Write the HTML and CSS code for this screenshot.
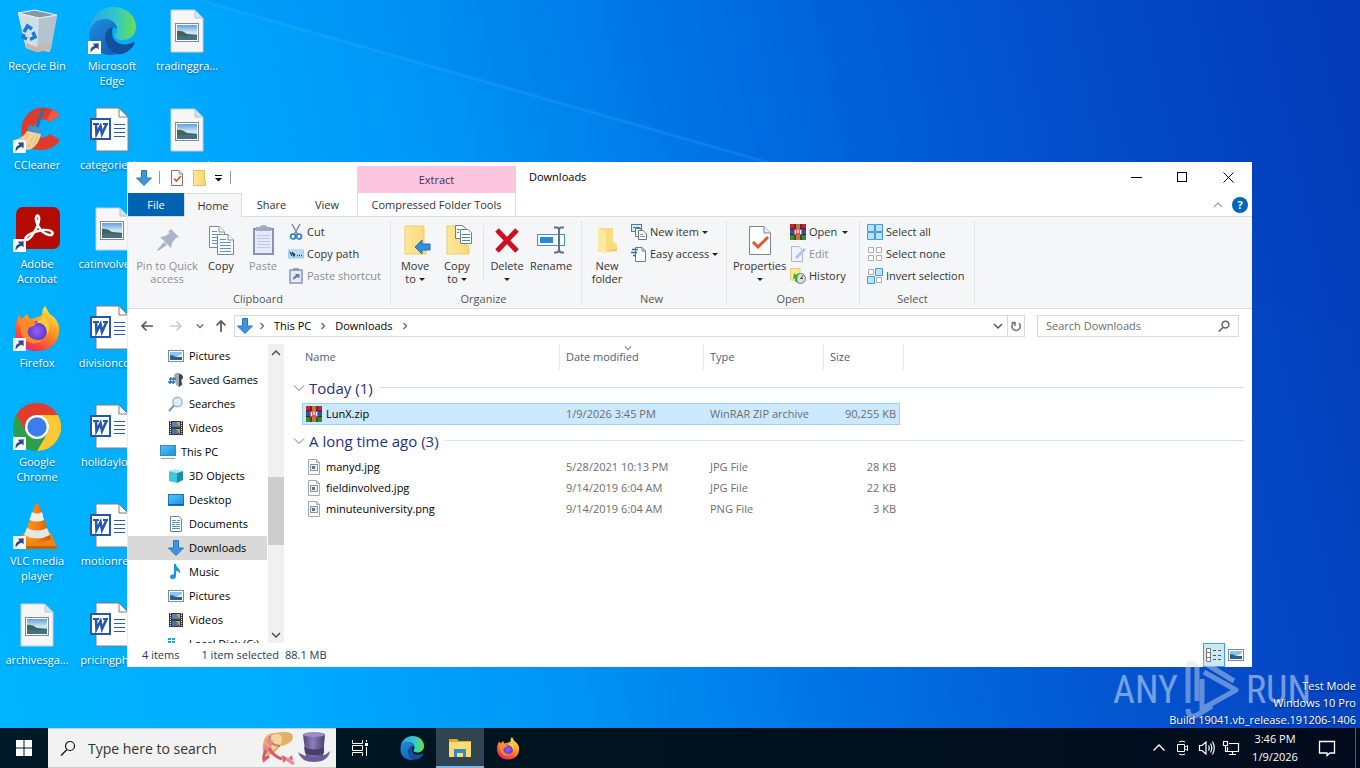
FILE: index.html
```html
<!DOCTYPE html>
<html lang="en">
<head>
<meta charset="utf-8">
<title>Downloads</title>
<link rel="stylesheet" href="styles.css">
</head>
<body>
<svg class="defs" aria-hidden="true">
<defs>
<linearGradient id="gEdgeA" x1="0" y1="0" x2="1" y2="0"><stop offset="0" stop-color="#2aa6e8"/><stop offset=".55" stop-color="#2fc6cf"/><stop offset="1" stop-color="#6be04c"/></linearGradient>
<linearGradient id="gEdgeB" x1="0" y1="0" x2=".6" y2="1"><stop offset="0" stop-color="#1f8fe0"/><stop offset="1" stop-color="#1263b8"/></linearGradient>
<linearGradient id="gFox" x1=".8" y1="0" x2=".2" y2="1"><stop offset="0" stop-color="#fff04a"/><stop offset=".4" stop-color="#ff9a1f"/><stop offset=".75" stop-color="#ff4a3d"/><stop offset="1" stop-color="#e8157a"/></linearGradient>
<radialGradient id="gFoxIn"><stop offset="0" stop-color="#9a5bff"/><stop offset="1" stop-color="#5a3cc4"/></radialGradient>
<linearGradient id="gCone" x1="0" y1="0" x2="1" y2="0"><stop offset="0" stop-color="#ff9a20"/><stop offset=".5" stop-color="#f57f10"/><stop offset="1" stop-color="#c95c00"/></linearGradient>
<linearGradient id="gSky" x1="0" y1="0" x2="0" y2="1"><stop offset="0" stop-color="#5f9fe0"/><stop offset=".5" stop-color="#cfe6f5"/><stop offset="1" stop-color="#7fa6bf"/></linearGradient>
<linearGradient id="gFold" x1="0" y1="0" x2="1" y2="0"><stop offset="0" stop-color="#ffe79a"/><stop offset="1" stop-color="#f7d876"/></linearGradient>
<linearGradient id="gBin" x1="0" y1="0" x2="1" y2="0"><stop offset="0" stop-color="#d5e4ee"/><stop offset=".55" stop-color="#e9f0f4"/><stop offset="1" stop-color="#9fb3c2"/></linearGradient>
<linearGradient id="gScreen" x1="0" y1="0" x2="1" y2="1"><stop offset="0" stop-color="#58c4fb"/><stop offset="1" stop-color="#1590e4"/></linearGradient>
<linearGradient id="gHat" x1="0" y1="0" x2="1" y2="0"><stop offset="0" stop-color="#54457c"/><stop offset=".45" stop-color="#8d7cb8"/><stop offset="1" stop-color="#4b3d70"/></linearGradient>

<symbol id="shortcut" viewBox="0 0 12 12"><rect width="12" height="12" fill="#f7f9fb"/><path d="M2.500 10.500C2 7 3.500 5 6 4.600L4.500 2.500L9.800 2L9.800 7.500L8 6.200C6 6.500 4.500 8 2.500 10.500Z" fill="#2b4a86"/></symbol>
<symbol id="bin" viewBox="0 0 48 48"><path d="M5 6L13 41L37 45L44 9Z" fill="url(#gBin)"/><path d="M5 6L26 10L24 45L13 41Z" fill="#cfdfe9"/><path d="M26 10L44 9L38 42L24 45Z" fill="#b4c3cd"/><path d="M5 6L22 3L44 8L26 11Z" fill="#8699a6" stroke="#eef5f9"/><path d="M13 36L24 40L38 37L37 43L24 45L13 41Z" fill="#c9b8a8"/><g fill="none" stroke="#1a7ad0" stroke-width="3.500"><path d="M11 25L14.500 19L19 22"/><path d="M20 25L22 30L17 32.500"/><path d="M14 32L10 30L11 27"/></g></symbol>
<symbol id="edge" viewBox="0 0 48 48"><path d="M1 27C1 10 12 0 25 0C39 0 48 9 48 20C48 28 42 33 35 33C29 33 27 31 27 29C27 27 29 26 29 22C29 17 24 12 16 12C8 12 3 18 1 27Z" fill="url(#gEdgeA)"/><path d="M1 27C3 17 9 12 17 12C24 12 29 17 29 22C26 18 17 22 17 31C17 38 22 45 29 47C14 51 1 41 1 27Z" fill="url(#gEdgeB)"/><path d="M17 31C17 25 20 21 25 20C23 26 24 35 33 37C38 38 42 37 45 35C47 34 47 36 46 38C41 45 35 48 29 47C22 45 17 38 17 31Z" fill="#154f9c"/></symbol>
<symbol id="picpage" viewBox="0 0 48 48"><path d="M8 3H32L40 11V45H8Z" fill="#f6f6f6" stroke="#c9ccd0"/><path d="M32 3V11H40Z" fill="#c9e7f7" stroke="#b9c4ca"/><rect x="12.500" y="16.500" width="23" height="18" fill="#fff" stroke="#7f8c93"/><rect x="14" y="18" width="20" height="15" fill="url(#gSky)"/><path d="M14 24Q19 23 24 27L34 28V29H14Z" fill="#3f6650"/><path d="M14 29H34V33H14Z" fill="#456f8b"/></symbol>
<symbol id="word" viewBox="0 0 48 48"><path d="M8 2H31L40 11V45H8Z" fill="#fff" stroke="#7d7d7d"/><path d="M31 2V11H40Z" fill="#fff" stroke="#7d7d7d"/><g stroke="#2b5fb4"><path d="M26 18.500H37M26 22.500H37M26 26.500H37M26 30.500H37"/></g><rect x="3" y="13" width="19" height="20" fill="#fff" stroke="#2457ad" stroke-width="2"/><path d="M5 18H11M15 18H20" stroke="#2457ad" stroke-width="2"/><path d="M8 18L8.500 28L12.500 20L14 28L18.500 18" fill="none" stroke="#2457ad" stroke-width="2.600"/></symbol>
<symbol id="ccleaner" viewBox="0 0 48 48"><path d="M47 9C35-4 13 0 9 19C6 36 16 45 28 44C37 44 43 40 47 34L37 28C31 34 21 32 21 23C21 14 31 11 37 16Z" fill="#dd3b2b"/><path d="M47 9L37 16L34 13L40 3Z" fill="#f05a42"/><path d="M30 3L24 21" stroke="#2a6fa8" stroke-width="3"/><path d="M16 19L28 22L29 28L14 26Z" fill="#3f94cf"/><path d="M14 25L28 28C26 38 20 43 15 44C9 42 4 38 1 34C7 33 11 30 14 25Z" fill="#f3d29c"/><path d="M16 28L9 38M21 29L15 41M25 29L20 40" stroke="#dcb77c"/></symbol>
<symbol id="acrobat" viewBox="0 0 48 48"><rect x="3" y="2" width="44" height="42" rx="7" fill="#b30b00"/><path d="M13 35C10 32 20 26 30 25C41 24 42 31 36 30C30 29 24 22 23 15C22 9 27 9 26 15C25 22 18 35 13 35Z" fill="none" stroke="#fff" stroke-width="2.500"/></symbol>
<symbol id="firefox" viewBox="0 0 48 48"><path d="M32 2C35 6 35 9 38 11C44 15 47 21 46 28C45 40 36 47 24 47C12 47 2 39 2 26C2 20 4 15 6 11L9 15C11 12 13 11 14 10L17 15C22 14 26 13 29 11C29 7 30 4 32 2Z" fill="url(#gFox)"/><circle cx="24" cy="27" r="10" fill="url(#gFoxIn)"/><path d="M5 17C11 12 18 15 23 19C22 23 16 22 15 26C13 33 22 38 31 35C25 43 9 40 8 26C8 22 5 21 5 17Z" fill="#ff8a2b"/><path d="M30 12C36 17 38 24 34 31C35 20 26 18 23 19C25 16 29 16 30 12Z" fill="#ffc93a"/></symbol>
<symbol id="chrome" viewBox="0 0 48 48"><circle cx="24" cy="24" r="24" fill="#2da94f"/><path d="M3.200 12A24 24 0 0 1 44.800 12H24A12 12 0 0 0 13.600 30Z" fill="#e33b2e"/><path d="M44.800 12A24 24 0 0 1 24 48L34.400 30A12 12 0 0 0 34.400 18L24 12Z" fill="#fcc934"/><path d="M3.200 12A24 24 0 0 0 24 48L34.400 30H13.600Z" fill="#2d9f4b"/><circle cx="24" cy="24" r="12" fill="#fff"/><circle cx="24" cy="24" r="9.700" fill="#3b7ded"/></symbol>
<symbol id="vlc" viewBox="0 0 48 48"><path d="M10 31H38L44 46H4Z" fill="#f08312"/><path d="M4 44H44V47H4Z" fill="#c46208"/><path d="M22 3Q24 0 26 3L38 37Q24 44 10 37Z" fill="url(#gCone)"/><path d="M19 10Q24 13 29 10L31 18Q24 21 16.500 18Z" fill="#efefef"/><path d="M14 26Q24 31 34 26L37 33Q24 40 11 33Z" fill="#e6e6e6"/></symbol>

<symbol id="down" viewBox="0 0 16 16"><path d="M5.500 .5H10.500V8H15.500L8 15.500L.5 8H5.500Z" fill="#3d95e0" stroke="#2577bd"/></symbol>
<symbol id="prop" viewBox="0 0 16 16"><path d="M2.500 .5H10L13.500 4V15.500H2.500Z" fill="#fff" stroke="#777"/><path d="M10 .5V4H13.500" fill="none" stroke="#999"/><path d="M5 8.500L7.500 11L12 6" fill="none" stroke="#d8502e" stroke-width="1.600"/></symbol>
<symbol id="folder" viewBox="0 0 16 16"><path d="M1.500 .5H12.500V10L13.500 11V15.500H1.500Z" fill="url(#gFold)" stroke="#e4bf55"/></symbol>
<symbol id="pin" viewBox="0 0 32 32"><path d="M17 8L20 5L28 13L25 14L21 19L20 24L9 13L14 12L19 9ZM13 18L16 21L7 27L6 26Z" fill="#aab5c8"/></symbol>
<symbol id="copy" viewBox="0 0 32 32"><g fill="#fff" stroke="#7f8790"><path d="M4.500 2.500H14L19.500 8V23.500H4.500Z"/><path d="M12.500 10.500H23L28.500 16V30.500H12.500Z"/><path d="M14 2.500V8H19.500M23 10.500V16H28.500"/></g><path d="M7 7.500H12M7 10.500H12M7 13.500H12M7 16.500H12M7 19.500H12M15 15.500H21M15 18.500H26M15 21.500H26M15 24.500H26M15 27.500H26" stroke="#5c93d8"/></symbol>
<symbol id="paste" viewBox="0 0 32 32"><rect x="7" y="5" width="19" height="25" fill="#e4eafa" stroke="#8795b5" stroke-width="2"/><path d="M9 3H13Q13 1 16.500 1T20 3H24V7H9Z" fill="#a0aabd"/><path d="M10 11.500H23M10 14.500H23M10 17.500H23M10 20.500H23M10 23.500H23" stroke="#bcc8e4"/></symbol>
<symbol id="cut" viewBox="0 0 16 16"><path d="M4 0L10 11M12 0L6 11" stroke="#7d8894" stroke-width="1.400"/><g fill="none" stroke="#2c7fc4" stroke-width="1.700"><circle cx="5" cy="12.500" r="2.500"/><circle cx="11" cy="12.500" r="2.500"/></g></symbol>
<symbol id="path" viewBox="0 0 16 16"><rect x=".5" y="4" width="15" height="8" fill="#b9dcf6" stroke="#a4cbe8"/><path d="M2 6L4 10M4 6L6 10L7 8M9 9.500H10M11 9.500H12M13 9.500H14" stroke="#20466e" stroke-width="1.300"/></symbol>
<symbol id="pasteshort" viewBox="0 0 16 16"><rect x="2" y="2" width="12" height="13" fill="#e6ebf8" stroke="#8795b5" stroke-width="1.500"/><path d="M5 0H11V3H5Z" fill="#929db8"/><path d="M5 12C5 9 6 8 8 7.500L7 6H11.500V10.500L10 9C8 9.500 7 10.500 5 12Z" fill="#6176a9"/></symbol>
<symbol id="moveto" viewBox="0 0 32 32"><path d="M6 2H25V20L27 22V30H6Z" fill="url(#gFold)" stroke="#edcd68"/><path d="M16 23L23 16V20H31V26H23V30Z" fill="#2f8fe0" stroke="#2272b8"/></symbol>
<symbol id="copyto" viewBox="0 0 32 32"><path d="M6 2H23V20L28 22V30H6Z" fill="url(#gFold)" stroke="#edcd68"/><g fill="#fff" stroke="#6f7f8f"><path d="M14.500 1.500H21L25.500 5V14.500H14.500Z"/><path d="M19.500 5.500H27L30.500 9V19.500H19.500Z"/></g><path d="M16 5.500H19M16 8.500H18M21 10.500H29M21 13.500H29M21 16.500H29" stroke="#3a82cc"/></symbol>
<symbol id="delete" viewBox="0 0 32 32"><path d="M6 6L26 27M26 6L6 27" stroke="#cf1021" stroke-width="5"/></symbol>
<symbol id="rename" viewBox="0 0 32 32"><rect x="2.500" y="10.500" width="27" height="11" fill="#fff" stroke="#3a94d8"/><rect x="5" y="13" width="13" height="6" fill="#2a88d4"/><path d="M19 3.500H22Q24 3.500 24 6V25Q24 28.500 21 28.500H19M29 3.500H26Q24 3.500 24 6M24 25Q24 28.500 27 28.500H29" fill="none" stroke="#66717a" stroke-width="2"/></symbol>
<symbol id="newfolder" viewBox="0 0 32 32"><path d="M7 4H22V18L26 20V27L18 28H7Z" fill="#f9dc82"/><path d="M7 4L15 8V30L7 26Z" fill="#ffeaa5"/><path d="M15 27L25 25L26 27H15Z" fill="#eac45e"/></symbol>
<symbol id="newitem" viewBox="0 0 16 16"><rect x=".5" y=".5" width="10" height="7" fill="#d5ebfb" stroke="#3b7fb4"/><path d="M2 3.500H9" stroke="#3b7fb4"/><g fill="#fff" stroke="#69757e"><path d="M4.500 4.500H10V12.500H4.500Z"/><path d="M7.500 6.500H12L15.500 10V15.500H7.500Z"/></g><path d="M9 10.500H12M9 12.500H14" stroke="#a67bb6"/></symbol>
<symbol id="easy" viewBox="0 0 16 16"><path d="M4.500 1.500H11L14.500 5V15.500H4.500Z" fill="#fff" stroke="#6f7b84"/><path d="M11 1.500V5H14.500" fill="none" stroke="#6f7b84"/><path d="M1 3.500H7M0 6.500H6M2 9.500H5" stroke="#2d6fae" stroke-width="1.300"/></symbol>
<symbol id="propbig" viewBox="0 0 32 32"><path d="M5.500 2.500H20L26.500 9V30.500H5.500Z" fill="#fff" stroke="#7c868e"/><path d="M20 2.500V9H26.500" fill="#e8f0f5" stroke="#7c868e"/><path d="M9 18L14 23L24 13" fill="none" stroke="#e2562f" stroke-width="3"/></symbol>
<symbol id="rar" viewBox="0 0 16 16"><rect width="16" height="5" fill="#c22437"/><rect y="5" width="16" height="6" fill="#31529c"/><rect y="11" width="16" height="5" fill="#3c8637"/><path d="M0 5H16M0 10.500H16M5 0V16M11 0V16" stroke="#262329"/><path d="M6 0H10V16H6Z" fill="#be7c32"/><path d="M4 5H12V11H4Z" fill="#da485a"/><path d="M5.500 6V10M8 5.500V9M10.500 6V10" stroke="#fff" stroke-width="1.300"/></symbol>
<symbol id="edit" viewBox="0 0 16 16"><path d="M1.500 .5H9L12.500 4V15.500H1.500Z" fill="#eef2fb" stroke="#a8b6d4"/><path d="M5 13L6 10L14 2L16 4L8 12Z" fill="#b7c3dd"/></symbol>
<symbol id="history" viewBox="0 0 16 16"><path d="M.5 .5H10V12H.5Z" fill="#fde694" stroke="#e8cc6a"/><circle cx="10.500" cy="10.500" r="5" fill="#d9dde0" stroke="#6f7a80"/><path d="M10.500 10.500L13 7.500M10.500 10.500H13" stroke="#444"/><path d="M3 11L4 5L6 7Q8 5 10 5Q6 8 8 15Q4 14 5 10Z" fill="#3fa73c"/></symbol>
<symbol id="selall" viewBox="0 0 16 16"><path d="M.5 .5H7.500V7.500H.5ZM8.500 .5H15.500V7.500H8.500ZM.5 8.500H7.500V15.500H.5ZM8.500 8.500H15.500V15.500H8.500Z" fill="#b9e2fb" stroke="#419dd9"/></symbol>
<symbol id="selnone" viewBox="0 0 16 16"><path d="M1.500 1.500H6.500V6.500H1.500ZM9.500 1.500H14.500V6.500H9.500ZM1.500 9.500H6.500V14.500H1.500ZM9.500 9.500H14.500V14.500H9.500Z" fill="#fff" stroke="#a9adb0"/></symbol>
<symbol id="selinv" viewBox="0 0 16 16"><path d="M1.500 1.500H6.500V6.500H1.500ZM9.500 9.500H14.500V14.500H9.500Z" fill="#fff" stroke="#a9adb0"/><path d="M8.500 .5H15.500V7.500H8.500ZM.5 8.500H7.500V15.500H.5Z" fill="#b9e2fb" stroke="#419dd9"/></symbol>

<symbol id="pictures" viewBox="0 0 16 16"><rect x=".5" y="2.500" width="15" height="11" fill="#fff" stroke="#7f8b94"/><rect x="2" y="4" width="12" height="8" fill="#8cc3ee"/><path d="M2 7Q5 7 8 9L14 8V12H2Z" fill="#2d5f8f"/><path d="M8 9L14 6V9Z" fill="#e8f3fa"/></symbol>
<symbol id="games" viewBox="0 0 16 16"><path d="M6 3Q8 0 11 1T15 6L13 9L15 13L11 15L8 13Z" fill="#a3aab0"/><path d="M11 2Q15 2 15 6L13 8L14 12L11 15Z" fill="#3c4248"/><path d="M1 7H8M0 10H7M3 5L2 12M6 5L5 12" stroke="#2b73b7" stroke-width="1.400"/></symbol>
<symbol id="searches" viewBox="0 0 16 16"><circle cx="9.500" cy="6" r="4.700" fill="#dbeefb" stroke="#9fb2c0" stroke-width="1.400"/><path d="M6 9.500L1 15" stroke="#8195a5" stroke-width="2"/></symbol>
<symbol id="videos" viewBox="0 0 16 16"><rect x="1" y="1" width="14" height="14" fill="#3a3a3a"/><path d="M2.500 1V15M13.500 1V15" stroke="#e5e5e5" stroke-dasharray="1 1"/><rect x="4" y="2" width="8" height="5" fill="#557fb8"/><rect x="4" y="9" width="8" height="5" fill="#4d6fa5"/><path d="M8 2H12V7ZM8 9H12V14Z" fill="#c9a83e"/></symbol>
<symbol id="pc" viewBox="0 0 16 16"><rect x=".5" y="1.500" width="15" height="10" fill="url(#gScreen)" stroke="#3789bd"/><path d="M1 14.500H15" stroke="#8ba5b5"/></symbol>
<symbol id="cube" viewBox="0 0 16 16"><path d="M1 3L7 1L15 3L9 5Z" fill="#a5eaf4"/><path d="M1 3L9 5V15L1 13Z" fill="#41c4dc"/><path d="M9 5L15 3V12L9 15Z" fill="#1591ad"/></symbol>
<symbol id="desktop" viewBox="0 0 16 16"><rect x=".5" y="2.500" width="15" height="11" fill="url(#gScreen)" stroke="#1775b8"/><path d="M1 12.500H15" stroke="#0f5e9a"/></symbol>
<symbol id="docs" viewBox="0 0 16 16"><path d="M2.500 .5H11L13.500 3V15.500H2.500Z" fill="#fff" stroke="#71838f"/><path d="M4 4.500H8M9 4.500H12M4 6.500H12M4 8.500H7M4 10.500H12M4 12.500H12M8 8.500H12" stroke="#4c9ab5"/></symbol>
<symbol id="music" viewBox="0 0 16 16"><path d="M8 0C8 4 13 4 12 10C11 7 9 7 8 7V12C8 16 2 16 2 13C2 11 4 10 6 10.500V0Z" fill="#1b96e4"/></symbol>
<symbol id="disk" viewBox="0 0 16 16"><path d="M0 2H3V4H0ZM4 2H7V4H4ZM0 5H3V7H0ZM4 5H7V7H4Z" fill="#1ea0e4"/><rect x="1" y="9" width="14" height="4" fill="#9ba5ab"/></symbol>
<symbol id="imgfile" viewBox="0 0 16 16"><path d="M2.500 .5H10.500L13.500 3.500V15.500H2.500Z" fill="#fff" stroke="#a3a8ac"/><path d="M10.500 .5V3.500H13.500" fill="none" stroke="#a3a8ac"/><rect x="4.500" y="5.500" width="7" height="6" fill="#e4eef4" stroke="#8a969e"/><path d="M6 7H9V10H6Z" fill="#5e7684"/></symbol>
<symbol id="chev" viewBox="0 0 10 10"><path d="M1 3L5 7L9 3" fill="none" stroke="currentColor" stroke-width="1.500"/></symbol>
<symbol id="chevthin" viewBox="0 0 12 12"><path d="M1 3.500L6 8.500L11 3.500" fill="none" stroke="currentColor"/></symbol>
<symbol id="chevr" viewBox="0 0 10 10"><path d="M3.500 2L6.500 5L3.500 8" fill="none" stroke="currentColor" stroke-width="1.300"/></symbol>
<symbol id="arrow" viewBox="0 0 14 14"><path d="M13 7H2M6.500 2.500L2 7L6.500 11.500" fill="none" stroke="currentColor" stroke-width="1.600"/></symbol>
<symbol id="uparrow" viewBox="0 0 14 14"><path d="M7 13V2M2.500 6.500L7 2L11.500 6.500" fill="none" stroke="currentColor" stroke-width="1.700"/></symbol>
<symbol id="mag" viewBox="0 0 16 16"><circle cx="10" cy="6" r="4.500" fill="none" stroke="currentColor" stroke-width="var(--mag,1.200)"/><path d="M7 9.500L1 15.500" stroke="currentColor" stroke-width="var(--mag,1.200)"/></symbol>
</defs>
</svg>

<main class="desktop">
  <svg class="beams" viewBox="0 0 1360 728" preserveAspectRatio="none" aria-hidden="true"><path d="M200 0L770 163" stroke="#5fc0ff" stroke-opacity=".16" stroke-width="3"/><path d="M200 0L1360 330V0Z" fill="#003cc0" fill-opacity=".05"/></svg>
  <div class="shortcuts">
    <a class="item" href="#"><svg class="ic48"><use href="#bin"/></svg>Recycle Bin</a>
    <a class="item" href="#"><svg class="ic48"><use href="#ccleaner"/><use href="#shortcut" y="34" width="13" height="13"/></svg>CCleaner</a>
    <a class="item" href="#"><svg class="ic48"><use href="#acrobat"/><use href="#shortcut" y="34" width="13" height="13"/></svg>Adobe<br>Acrobat</a>
    <a class="item" href="#"><svg class="ic48"><use href="#firefox"/><use href="#shortcut" y="34" width="13" height="13"/></svg>Firefox</a>
    <a class="item" href="#"><svg class="ic48"><use href="#chrome"/><use href="#shortcut" y="34" width="13" height="13"/></svg>Google<br>Chrome</a>
    <a class="item" href="#"><svg class="ic48"><use href="#vlc"/><use href="#shortcut" y="34" width="13" height="13"/></svg>VLC media<br>player</a>
    <a class="item" href="#"><svg class="ic48"><use href="#picpage"/></svg>archivesga...</a>
    <a class="item" href="#"><svg class="ic48"><use href="#edge"/><use href="#shortcut" y="34" width="13" height="13"/></svg>Microsoft<br>Edge</a>
    <a class="item" href="#"><svg class="ic48"><use href="#word"/></svg>categoriesl...</a>
    <a class="item" href="#"><svg class="ic48"><use href="#picpage"/></svg>catinvolved...</a>
    <a class="item" href="#"><svg class="ic48"><use href="#word"/></svg>divisioncou...</a>
    <a class="item" href="#"><svg class="ic48"><use href="#word"/></svg>holidaylon...</a>
    <a class="item" href="#"><svg class="ic48"><use href="#word"/></svg>motionrea...</a>
    <a class="item" href="#"><svg class="ic48"><use href="#word"/></svg>pricingpho...</a>
    <a class="item" href="#"><svg class="ic48"><use href="#picpage"/></svg>tradinggra...</a>
    <a class="item" href="#"><svg class="ic48"><use href="#picpage"/></svg>summerwi...</a>
  </div>

  <section class="window" aria-label="Downloads">
    <header class="titlebar">
      <div class="quick">
        <svg class="ic16"><use href="#down"/></svg><span class="bar"></span>
        <button class="qprop" aria-label="Properties"><svg class="ic16"><use href="#prop"/></svg></button>
        <button aria-label="New folder"><svg class="ic16"><use href="#folder"/></svg></button>
        <button class="more" aria-label="Customize"><svg width="8" height="8" viewBox="0 0 8 8"><path d="M0 1.500H7" stroke="#000"/><path d="M0 4H7L3.500 7.500Z"/></svg></button><span class="bar"></span>
      </div>
      <div class="extract">Extract</div>
      <h1 class="title">Downloads</h1>
      <div class="controls">
        <button aria-label="Minimize"><svg class="ic11"><path d="M0 5.500H11" stroke="#000"/></svg></button>
        <button aria-label="Maximize"><svg class="ic11"><rect x=".5" y=".5" width="9" height="9" fill="none" stroke="#000"/></svg></button>
        <button aria-label="Close"><svg class="ic11"><path d="M.5 .5L10.500 10.500M10.500 .5L.5 10.500" stroke="#000"/></svg></button>
      </div>
    </header>
    <nav class="tabs">
      <button class="tab file">File</button><button class="tab home">Home</button><button class="tab">Share</button><button class="tab view">View</button><button class="tab context">Compressed Folder Tools</button>
      <div class="tabtools"><button class="fold" aria-label="Collapse"><svg class="ic10 flip"><use href="#chev"/></svg></button><button class="help" aria-label="Help">?</button></div>
    </nav>
    <div class="ribbon">
      <section class="group g-clip">
        <div class="tools">
          <button class="big wide off"><svg class="ic32"><use href="#pin"/></svg>Pin to Quick access</button>
          <button class="big"><svg class="ic32"><use href="#copy"/></svg>Copy</button>
          <button class="big off"><svg class="ic32"><use href="#paste"/></svg>Paste</button>
          <div class="smalls"><button class="small"><svg class="ic16"><use href="#cut"/></svg>Cut</button><button class="small"><svg class="ic16"><use href="#path"/></svg>Copy path</button><button class="small off"><svg class="ic16"><use href="#pasteshort"/></svg>Paste shortcut</button></div>
        </div><h2>Clipboard</h2>
      </section>
      <section class="group g-org">
        <div class="tools">
          <button class="big"><svg class="ic32"><use href="#moveto"/></svg>Move<span>to<i class="caret"></i></span></button>
          <button class="big"><svg class="ic32"><use href="#copyto"/></svg>Copy<span>to<i class="caret"></i></span></button>
          <span class="split"></span>
          <button class="big"><svg class="ic32"><use href="#delete"/></svg>Delete<span><i class="caret alone"></i></span></button>
          <button class="big"><svg class="ic32"><use href="#rename"/></svg>Rename</button>
        </div><h2>Organize</h2>
      </section>
      <section class="group g-new">
        <div class="tools">
          <button class="big"><svg class="ic32"><use href="#newfolder"/></svg>New folder</button>
          <div class="smalls"><button class="small"><svg class="ic16"><use href="#newitem"/></svg>New item<i class="caret"></i></button><button class="small"><svg class="ic16"><use href="#easy"/></svg>Easy access<i class="caret"></i></button></div>
        </div><h2>New</h2>
      </section>
      <section class="group g-open">
        <div class="tools">
          <button class="big prop"><svg class="ic32"><use href="#propbig"/></svg>Properties<span><i class="caret alone"></i></span></button>
          <div class="smalls"><button class="small"><svg class="ic16"><use href="#rar"/></svg>Open<i class="caret"></i></button><button class="small off"><svg class="ic16"><use href="#edit"/></svg>Edit</button><button class="small"><svg class="ic16"><use href="#history"/></svg>History</button></div>
        </div><h2>Open</h2>
      </section>
      <section class="group g-sel">
        <div class="tools">
          <div class="smalls"><button class="small"><svg class="ic16"><use href="#selall"/></svg>Select all</button><button class="small"><svg class="ic16"><use href="#selnone"/></svg>Select none</button><button class="small"><svg class="ic16"><use href="#selinv"/></svg>Invert selection</button></div>
        </div><h2>Select</h2>
      </section>
    </div>
    <div class="address">
      <div class="moves">
        <button aria-label="Back"><svg class="ic14"><use href="#arrow"/></svg></button>
        <button class="dim" aria-label="Forward"><svg class="ic14 flip"><use href="#arrow"/></svg></button>
        <button class="recent" aria-label="Recent locations"><svg class="ic8"><use href="#chev"/></svg></button>
        <button aria-label="Up"><svg class="ic14"><use href="#uparrow"/></svg></button>
      </div>
      <div class="crumbs">
        <svg class="ic16"><use href="#down"/></svg><svg class="ic10"><use href="#chevr"/></svg>
        <a href="#">This PC</a><svg class="ic10"><use href="#chevr"/></svg><a href="#">Downloads</a><svg class="ic10"><use href="#chevr"/></svg>
        <button class="drop" aria-label="Previous locations"><svg class="ic10"><use href="#chev"/></svg></button>
        <button class="reload" aria-label="Refresh"><svg class="ic14" viewBox="0 0 14 14"><path d="M4.500 4A4.200 4.200 0 1 0 10 4.200M2.500 3.500H6V7" fill="none" stroke="#777" stroke-width="1.600"/></svg></button>
      </div>
      <label class="find"><input type="text" placeholder="Search Downloads" aria-label="Search Downloads"><svg class="ic12"><use href="#mag"/></svg></label>
    </div>
    <div class="body">
      <nav class="tree">
        <a href="#"><svg class="ic16"><use href="#pictures"/></svg>Pictures</a>
        <a href="#"><svg class="ic16"><use href="#games"/></svg>Saved Games</a>
        <a href="#"><svg class="ic16"><use href="#searches"/></svg>Searches</a>
        <a href="#"><svg class="ic16"><use href="#videos"/></svg>Videos</a>
        <a href="#" class="root"><svg class="ic16"><use href="#pc"/></svg>This PC</a>
        <a href="#"><svg class="ic16"><use href="#cube"/></svg>3D Objects</a>
        <a href="#"><svg class="ic16"><use href="#desktop"/></svg>Desktop</a>
        <a href="#"><svg class="ic16"><use href="#docs"/></svg>Documents</a>
        <a href="#" class="on"><svg class="ic16"><use href="#down"/></svg>Downloads</a>
        <a href="#"><svg class="ic16"><use href="#music"/></svg>Music</a>
        <a href="#"><svg class="ic16"><use href="#pictures"/></svg>Pictures</a>
        <a href="#"><svg class="ic16"><use href="#videos"/></svg>Videos</a>
        <a href="#"><svg class="ic16"><use href="#disk"/></svg>Local Disk (C:)</a>
      </nav>
      <div class="scroll" aria-hidden="true"><svg class="ic10 flip"><use href="#chev"/></svg><div class="track"><div class="thumb"></div></div><svg class="ic10"><use href="#chev"/></svg></div>
      <div class="list">
        <table>
          <colgroup><col class="c-name"><col class="c-date"><col class="c-type"><col class="c-size"><col class="c-edge"><col></colgroup>
          <thead><tr><th>Name</th><th>Date modified<svg class="ic8 sort"><use href="#chev"/></svg></th><th>Type</th><th colspan="2">Size</th><th class="rest"></th></tr></thead>
          <tbody>
            <tr class="head first"><th colspan="6"><div class="headline"><svg class="ic12"><use href="#chevthin"/></svg>Today (1)</div></th></tr>
            <tr class="picked"><td><span class="fname"><svg class="ic16"><use href="#rar"/></svg>LunX.zip</span></td><td>1/9/2026 3:45 PM</td><td>WinRAR ZIP archive</td><td>90,255 KB</td></tr>
          </tbody>
          <tbody>
            <tr class="head"><th colspan="6"><div class="headline"><svg class="ic12"><use href="#chevthin"/></svg>A long time ago (3)</div></th></tr>
            <tr><td><span class="fname"><svg class="ic16"><use href="#imgfile"/></svg>manyd.jpg</span></td><td>5/28/2021 10:13 PM</td><td>JPG File</td><td>28 KB</td></tr>
            <tr><td><span class="fname"><svg class="ic16"><use href="#imgfile"/></svg>fieldinvolved.jpg</span></td><td>9/14/2019 6:04 AM</td><td>JPG File</td><td>22 KB</td></tr>
            <tr><td><span class="fname"><svg class="ic16"><use href="#imgfile"/></svg>minuteuniversity.png</span></td><td>9/14/2019 6:04 AM</td><td>PNG File</td><td>3 KB</td></tr>
          </tbody>
        </table>
      </div>
    </div>
    <footer class="status">
      <span class="count">4 items</span><span>1 item selected</span><span>88.1 MB</span>
      <div class="views">
        <button class="active" aria-label="Details"><svg width="18" height="16" viewBox="0 0 18 16"><path d="M1.500 1.500H5.500V14.500H1.500ZM1.500 5.500H5.500M1.500 10.500H5.500" fill="#fff" stroke="#777"/><path d="M8 3.500H11M13 3.500H16M8 8.500H11M13 8.500H16M8 12.500H11M13 12.500H16" stroke="#555"/></svg></button>
        <button aria-label="Large icons"><svg class="ic16"><use href="#pictures"/></svg></button>
      </div>
    </footer>
  </section>

  <div class="brand"><span>ANY</span><svg width="56" height="62" viewBox="0 0 56 62"><g fill="none" stroke="#d5e0ef" stroke-width="5" stroke-linejoin="round"><path d="M4 44V8Q4 2 10 5L13 7V42"/><path d="M19 3L50 22"/><path d="M20 13L52 31L18 50V20"/><path d="M4 50Q4 60 13 56L28 47"/></g></svg><span>RUN</span></div>
  <div class="notice">Test Mode<br>Windows 10 Pro<br>Build 19041.vb_release.191206-1406</div>
</main>

<footer class="taskbar">
  <button class="slot" aria-label="Start"><svg class="ic16" viewBox="0 0 16 16"><path d="M0 0H7.500V7.500H0ZM8.500 0H16V7.500H8.500ZM0 8.500H7.500V16H0ZM8.500 8.500H16V16H8.500Z" fill="#fff"/></svg></button>
  <label class="search"><svg class="ic16"><use href="#mag"/></svg><input type="text" placeholder="Type here to search" aria-label="Type here to search">
    <svg width="72" height="36" viewBox="0 0 72 36"><path d="M3 15Q4 3 15 3Q31 0 33 6Q33 14 20 16Q13 26 8 25Q1 23 3 15Z" fill="#e3b067"/><path d="M9 15Q9 3 18 4Q24 5 21 14L13 20Z" fill="#f6d79b"/><path d="M10 6Q8 12 15 15L20 16" fill="none" stroke="#d9707c" stroke-width="2"/><path d="M3 14L11 18L5 25ZM11 18L13 10L5 9Z" fill="#e58b90"/><path d="M9 18Q13 26 22 29M6 20Q3 26 4 30L9 26" fill="none" stroke="#d95a6e" stroke-width="3"/><path d="M22 25L33 31L32 25L23 33Z" fill="#db6574"/><path d="M26 29L34 34" stroke="#ed8793" stroke-width="3"/><path d="M43 5Q54 1 65 4L63 27H46Z" fill="url(#gHat)"/><ellipse cx="54" cy="4.500" rx="11" ry="2.500" fill="#9c8dc4"/><path d="M44 17Q54 22 64 17V23Q54 28 45 23Z" fill="#4b3d6b"/><path d="M38 22Q44 27 54 27T70 21Q68 32 54 32Q41 32 38 22Z" fill="#6d5b99"/></svg>
  </label>
  <button class="slot" aria-label="Task view"><svg class="ic18" viewBox="0 0 18 18"><path d="M1.500 1V4.500H11.500V1M1.500 6.500H11.500V11.500H1.500ZM1.500 17V13.500H11.500V17M15.500 1V3M15.500 8V17" fill="none" stroke="#fff"/><path d="M14 4H17V7H14Z" fill="#fff"/></svg></button>
  <button class="slot app" aria-label="Microsoft Edge"><svg class="ic24" viewBox="0 0 48 48"><use href="#edge"/></svg></button>
  <button class="slot open" aria-label="File Explorer"><svg class="ic24" viewBox="0 0 24 24"><path d="M1 3H9L11 5H23V8H1Z" fill="#e7a628"/><path d="M1 6H23V21H1Z" fill="#ffdb72"/><path d="M6 13H18V21H15V17H9V21H6Z" fill="#318bcb"/></svg></button>
  <button class="slot" aria-label="Firefox"><svg class="ic24" viewBox="0 0 48 48"><use href="#firefox"/></svg></button>
  <div class="tray">
    <button aria-label="Hidden icons"><svg class="ic14" viewBox="0 0 14 14"><path d="M1.500 9.500L7 4L12.500 9.500" fill="none" stroke="#fff" stroke-width="1.400"/></svg></button>
    <button aria-label="Meet Now"><svg class="ic16" viewBox="0 0 16 16"><path d="M4 2Q7 0 10 2M4 14Q7 16 10 14M2.500 4.500H9.500V11.500H2.500ZM9.500 7.500L12.500 5.500V10.500L9.500 8.500" fill="none" stroke="#fff"/></svg></button>
    <button aria-label="Volume"><svg class="ic18" viewBox="0 0 18 18"><path d="M1.500 6.500H4L8 3V15L4 11.500H1.500ZM10.500 6.500Q12 9 10.500 11.500M12.500 4.500Q15 9 12.500 13.500M14.500 2.500Q18 9 14.500 15.500" fill="none" stroke="#fff" stroke-width="1.200"/></svg></button>
    <button aria-label="Network"><svg class="ic18" viewBox="0 0 18 18"><path d="M7 4.500H16.500V12.500H5.500V8M10.500 13V15.500M7 15.500H14M1.500 2.500H5.500V6.500H1.500ZM3.500 7V12.500H5" fill="none" stroke="#fff" stroke-width="1.200"/></svg></button>
    <div class="clock">3:46 PM<br>1/9/2026</div>
    <button class="note" aria-label="Notifications"><svg class="ic18" viewBox="0 0 18 18"><path d="M1.500 2.500H16.500V14H12L9 16.500V14H1.500Z" fill="none" stroke="#fff" stroke-width="1.300"/></svg></button>
    <button class="peek" aria-label="Show desktop"></button>
  </div>
</footer>
</body>
</html>
```
FILE: styles.css
```css
* { box-sizing: border-box; }
body {
  margin: 0;
  min-height: 100vh;
  display: flex;
  flex-direction: column;
  overflow: hidden;
  font-family: "Open Sans", "Noto Sans", sans-serif;
  font-size: 11px;
  line-height: 14px;
  color: #000;
}
button, input { font: inherit; color: inherit; border: 0; padding: 0; margin: 0; background: none; }
a { color: inherit; text-decoration: none; }
h1, h2 { margin: 0; font: inherit; }
svg { flex: none; }
.defs { position: absolute; width: 0; height: 0; }
.ic8 { width: 8px; height: 8px; }
.ic10 { width: 10px; height: 10px; }
.ic11 { width: 11px; height: 11px; }
.ic12 { width: 12px; height: 12px; }
.ic14 { width: 14px; height: 14px; }
.ic16 { width: 16px; height: 16px; }
.ic18 { width: 18px; height: 18px; }
.ic24 { width: 24px; height: 24px; }
.ic32 { width: 32px; height: 32px; }
.ic48 { width: 48px; height: 48px; margin-bottom: 3px; }
.flip { transform: rotate(180deg); }

.desktop {
  position: relative;
  flex: 1;
  background: linear-gradient(78deg, #00b4ff 0%, #00adff 18%, #0094f5 38%, #006fe2 58%, #0450cc 78%, #043ab6 100%);
}
.beams { position: absolute; inset: 0; width: 100%; height: 100%; }
.shortcuts {
  position: relative;
  display: grid;
  grid-auto-flow: column;
  grid-template-rows: repeat(7, 99px);
  grid-auto-columns: 75px;
  justify-content: start;
}
.item {
  padding: 7px 1px 0 0;
  text-align: center;
  white-space: nowrap;
  line-height: 15px;
  color: #fff;
  text-shadow: 0 1px 2px rgba(0, 30, 80, .6);
}
.item svg { display: block; margin-left: 13px; }

.window {
  position: absolute;
  top: 162px;
  right: 108px;
  bottom: 61px;
  left: 127px;
  display: flex;
  flex-direction: column;
  background: #fff;
  border-left: 1px solid #d8f2fd;
}
.titlebar { display: flex; height: 31px; }
.quick { display: flex; align-items: center; width: 229px; padding-left: 8px; gap: 7px; }
.quick button { display: flex; }
.quick .qprop { margin-left: 2px; }
.bar { width: 1px; height: 13px; background: #999; }
.extract { width: 159px; margin-top: 4px; display: grid; place-items: center; background: #fcc6e1; color: #512d42; }
.title { flex: 1; padding: 8px 13px 0; }
.controls { display: flex; padding-right: 1px; }
.controls button { width: 46px; display: grid; place-items: center; }

.tabs { display: flex; height: 24px; border-bottom: 1px solid #dadbdc; color: #333; }
.tab { width: 59px; }
.tab.file { width: 56px; background: #0063b1; color: #fff; }
.tab.home { width: 58px; margin-bottom: -1px; background: #f5f6f7; border: 1px solid #dadbdc; border-width: 1px 1px 0; }
.tab.view { width: 56px; padding-right: 4px; }
.tab.context { width: 159px; border: 1px solid #eadbe3; border-width: 0 1px; }
.tabtools { margin-left: auto; display: flex; align-items: center; gap: 9px; padding-right: 4px; }
.fold { color: #aaa; display: flex; }
.help { width: 16px; height: 16px; border-radius: 50%; background: #0067b8; color: #fff; font-weight: 700; line-height: 16px; }

.ribbon { display: flex; height: 92px; padding: 4px 0 3px; background: #f5f6f7; border-bottom: 1px solid #dadbdc; color: #333; }
.group { display: flex; flex-direction: column; justify-content: space-between; border-right: 1px solid #e2e3e4; }
.group h2 { text-align: center; color: #555; line-height: 13px; padding-right: 8px; }
.g-clip { width: 263px; padding-left: 6px; }
.g-org { width: 191px; padding-left: 3px; }
.g-new { width: 145px; padding-left: 3px; }
.g-open { width: 133px; padding-left: 3px; }
.g-sel { width: 115px; padding-left: 7px; }
.g-sel h2 { padding-right: 16px; }
.tools { display: flex; }
.big { width: 42px; display: flex; flex-direction: column; align-items: center; line-height: 13px; padding-top: 3px; white-space: nowrap; }
.big svg { margin-bottom: 3px; }
.big.wide { width: 66px; white-space: normal; }
.big.prop { width: 59px; }
.g-org .big:last-child { width: 46px; }
.g-new .big { width: 44px; white-space: normal; }
.off { color: #8b8f94; }
.split { width: 1px; height: 56px; margin: 4px 2px 0 5px; background: #e2e3e4; }
.smalls { display: flex; flex-direction: column; padding-left: 4px; }
.g-new .smalls { padding-left: 2px; }
.g-open .smalls { padding-left: 1px; }
.g-sel .smalls { padding: 0; }
.small { display: flex; align-items: center; gap: 3px; height: 22px; white-space: nowrap; }
.caret { display: inline-block; width: 0; height: 0; border: 3px solid transparent; border-top: 3px solid #222; border-bottom: 0; margin: 0 0 2px 3px; }
.small .caret { margin: 0; }
.g-open .small .caret { margin-left: 2px; }
.caret.alone { margin-left: 0; }

.address { display: flex; align-items: center; height: 34px; margin-bottom: 1px; padding-right: 13px; }
.moves { display: flex; width: 106px; padding-left: 6px; color: #555; }
.moves button { width: 26px; display: grid; place-items: center; }
.moves .dim { width: 32px; color: #ccc; }
.moves .recent { width: 16px; }
.crumbs { flex: 1; height: 22px; display: flex; align-items: center; gap: 4px; padding-left: 2px; border: 1px solid #d9d9d9; }
.crumbs > svg { color: #666; }
.crumbs a { padding: 0 3px; }
.drop { margin-left: auto; display: flex; color: #555; }
.reload { align-self: stretch; width: 17px; display: grid; place-items: center; border-left: 1px solid #d9d9d9; }
.find { width: 202px; height: 22px; margin-left: 12px; display: flex; align-items: center; padding: 0 8px; border: 1px solid #d9d9d9; color: #666; --mag: 2; }
.find input { flex: 1; min-width: 0; outline: 0; }
input::placeholder { color: #6d6d6d; opacity: 1; }

.body { flex: 1; min-height: 0; display: flex; overflow: hidden; }
.tree { width: 139px; overflow: hidden; }
.tree a { display: flex; align-items: center; gap: 5px; height: 24px; padding-left: 40px; white-space: nowrap; }
.tree .root { padding-left: 32px; }
.tree .on { background: #d9d9d9; }
.scroll { width: 16px; margin-left: 1px; display: flex; flex-direction: column; align-items: center; background: #f0f0f0; color: #505050; padding: 4px 0 3px; }
.track { flex: 1; width: 100%; }
.thumb { height: 25%; margin-top: 119px; background: #cdcdcd; }
.list { flex: 1; padding: 0 8px 0 18px; }
table { width: 100%; table-layout: fixed; border-collapse: separate; border-spacing: 0; }
.c-name { width: 258px; }
.c-date { width: 144px; }
.c-type { width: 120px; }
.c-size { width: 76px; }
.c-edge { width: 4px; }
th { text-align: left; font-weight: 400; padding: 0; }
thead th { height: 26px; padding: 0 6px; border-right: 1px solid #e5e5e5; color: #4c607a; position: relative; }
thead th:first-child { padding-left: 3px; }
thead .rest { border: 0; }
.sort { position: absolute; top: 0; left: 64px; color: #888; }
.head th { height: 31px; }
.head.first th { height: 33px; padding-top: 2px; }
.headline { display: flex; align-items: center; gap: 4px; margin-left: -9px; font-size: 15px; line-height: 20px; color: #1e3287; }
.headline svg { color: #777; }
.headline::after { content: ""; flex: 1; height: 1px; margin-left: 2px; background: #dde1e8; }
td { height: 21px; padding: 0 6px; color: #6d6d6d; white-space: nowrap; }
td:first-child { padding-left: 4px; color: #000; }
td:nth-child(4) { text-align: right; padding-right: 4px; }
.fname { display: flex; align-items: center; gap: 4px; }
.picked td { height: 22px; background: #cce8ff; border: 1px solid #99d1ff; border-width: 1px 0; }
.picked td:first-child { border-left-width: 1px; padding-left: 3px; }
.picked td:nth-child(4) { border-right-width: 1px; padding-right: 3px; }

.status { display: flex; align-items: center; gap: 6px; height: 24px; padding: 0 5px 0 14px; color: #1e395b; }
.count { margin-right: 16px; }
.views { margin-left: auto; display: flex; }
.views button { height: 24px; width: 22px; display: grid; place-items: center; }
.views .active { background: #cce8f6; border: 1px solid #3aa6d8; }

.notice { position: absolute; right: 4px; bottom: 0; text-align: right; color: #fff; line-height: 17px; text-shadow: 0 1px 2px rgba(0, 0, 0, .6); }
.brand { position: absolute; right: 49px; bottom: 7px; display: flex; align-items: center; gap: 6px; color: #fff; opacity: .45; font: 38px/48px "Roboto Condensed", "Liberation Sans Narrow", "Open Sans", sans-serif; }

.taskbar { display: flex; height: 40px; background: linear-gradient(90deg, #001a27, #00131f 45%, #020b1d); color: #fff; }
.slot { width: 48px; display: grid; place-items: center; }
.slot.app { margin-left: 4px; }
.slot.open { background: #30454f; border-bottom: 2px solid #76b9ed; }
.slot.open svg { margin-top: 2px; }
.search { width: 288px; display: flex; align-items: center; gap: 12px; padding: 0 4px 0 12px; background: #f2f2f2; border: 1px solid #ccc; border-width: 1px 0; color: #111; font-size: 14px; }
.search input { flex: 1; min-width: 0; outline: 0; }
.search input::placeholder { color: #333; }
.tray { margin-left: auto; display: flex; align-items: center; }
.tray button { width: 24px; height: 40px; display: grid; place-items: center; }
.clock { width: 64px; text-align: center; line-height: 18px; }
.tray .note { width: 40px; }
.tray .peek { width: 5px; margin-left: 8px; border-left: 1px solid #555e6a; }
```
